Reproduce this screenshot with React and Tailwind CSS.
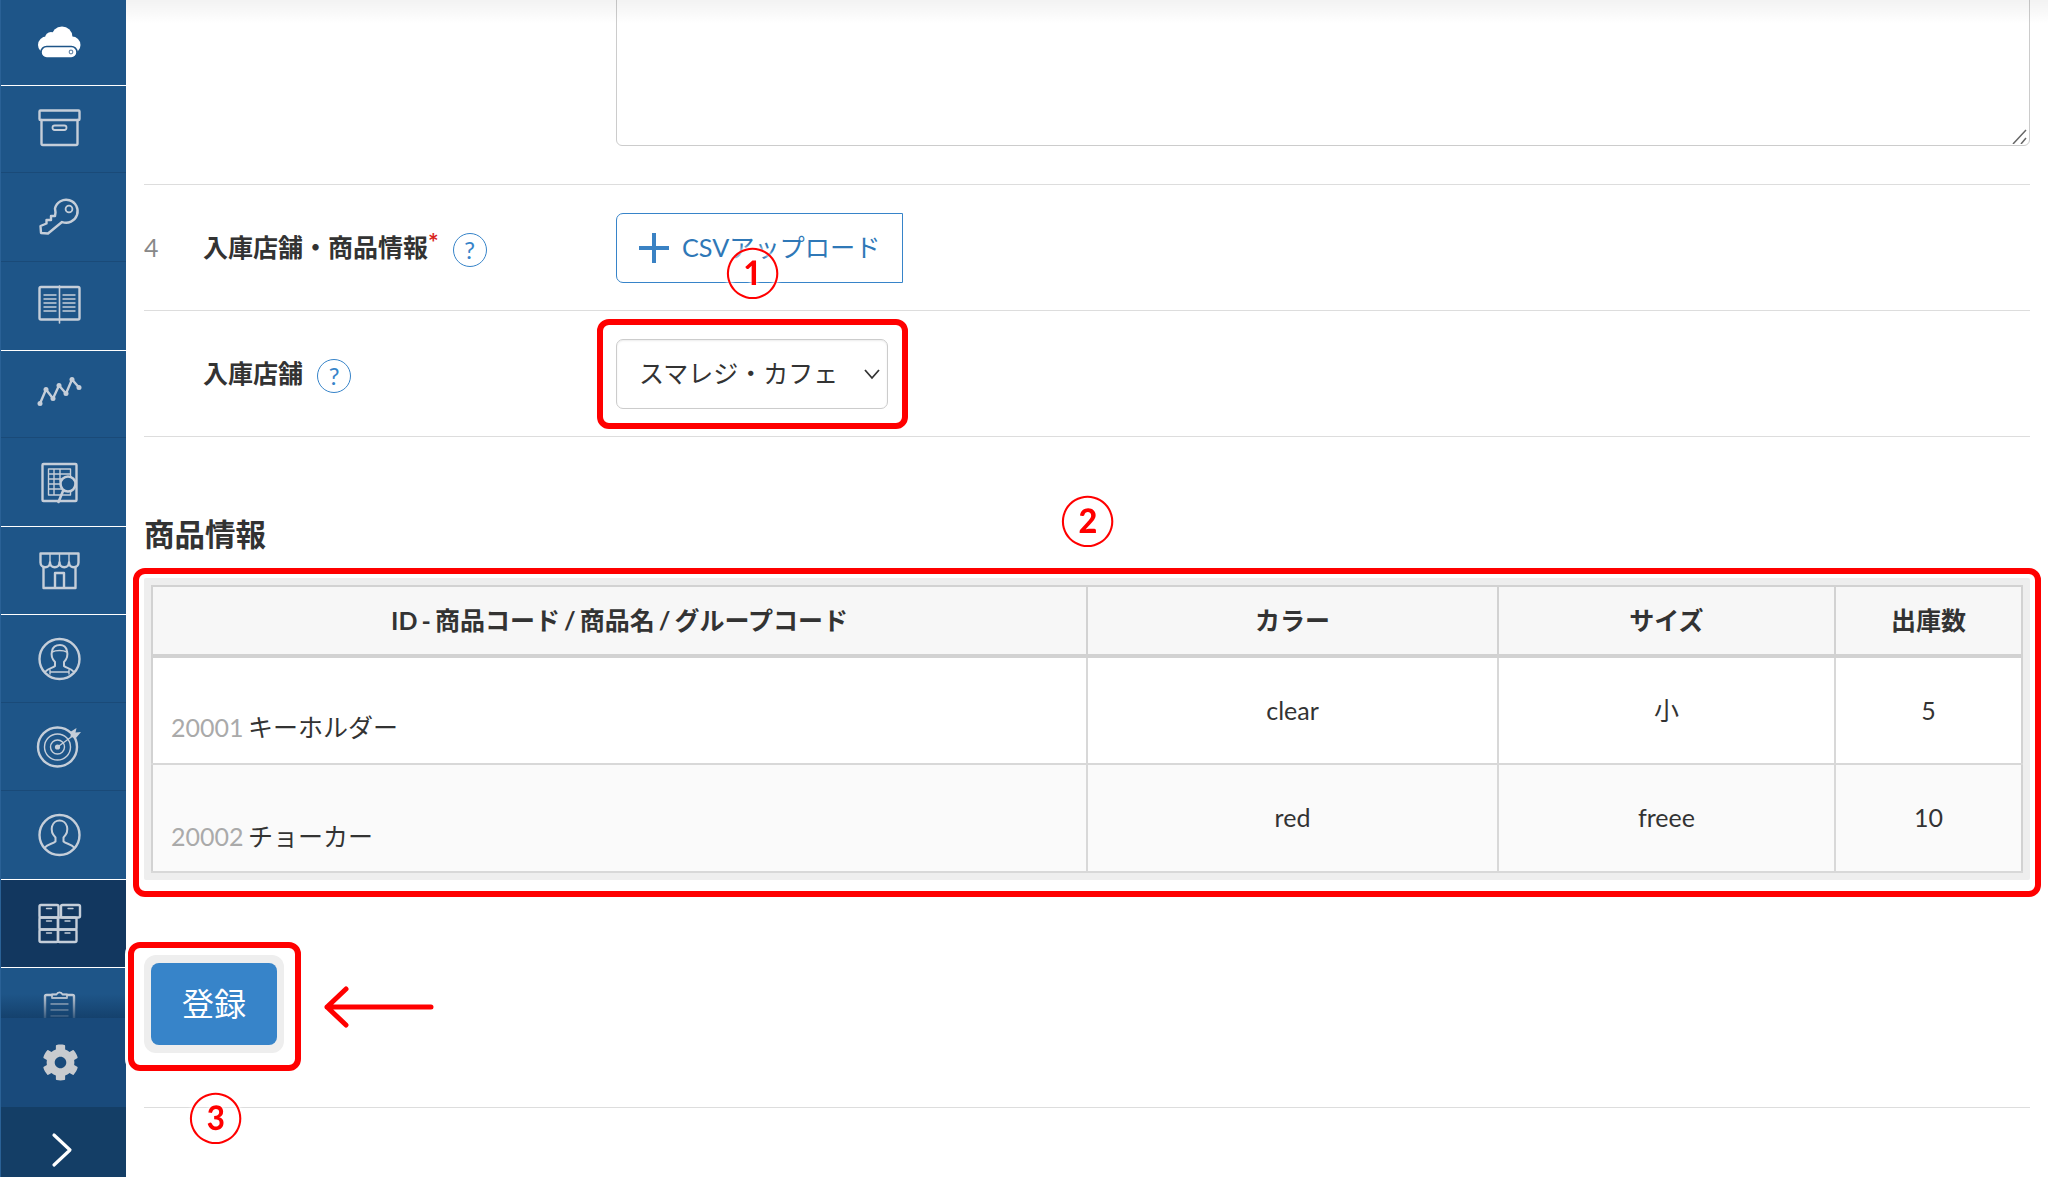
import { FaCog } from "react-icons/fa";

const line = { fill: "none", stroke: "#c5ced9", strokeWidth: 2.4, strokeLinecap: "round", strokeLinejoin: "round" };
const thin = { ...line, strokeWidth: 1.4 };

function Icon({ children }) {
  return (
    <svg width="46" height="46" viewBox="0 0 46 46">
      {children}
    </svg>
  );
}

function CloudIcon() {
  return (
    <Icon>
      <g fill="#ffffff">
        <circle cx="26" cy="17" r="10.5" />
        <circle cx="15" cy="18" r="6" />
        <circle cx="10.5" cy="25" r="8.5" />
        <circle cx="36" cy="25" r="8.5" />
        <rect x="10" y="20" width="26" height="13" />
      </g>
      <rect x="5" y="26.5" width="36" height="11.5" rx="5.7" fill="#ffffff" stroke="#1e5588" strokeWidth="1.6" />
      <circle cx="35" cy="32" r="1.8" fill="none" stroke="#6f8eae" strokeWidth="1.2" />
    </Icon>
  );
}

function BoxIcon() {
  return (
    <Icon>
      <rect x="3.5" y="4.5" width="40" height="9.5" rx="1" {...line} />
      <path d="M5.5 14v23.5a1.5 1.5 0 0 0 1.5 1.5h33a1.5 1.5 0 0 0 1.5-1.5V14" {...line} />
      <rect x="16.5" y="19.5" width="14" height="4.5" rx="2.2" {...thin} strokeWidth="1.8" />
    </Icon>
  );
}

function KeyIcon() {
  return (
    <Icon>
      <path d="M26 28 A11.5 11.5 0 1 0 19 14.5 L19.5 18.5 L19 22 L15 22 L15 26 L10.5 26 L10.5 29.5 L4.5 32 L5 39 L12 39.5 Z" {...line} />
      <circle cx="33" cy="15" r="3.4" {...line} strokeWidth="1.8" />
    </Icon>
  );
}

function BookIcon() {
  return (
    <Icon>
      <rect x="3.5" y="4" width="40" height="32.5" rx="1.5" {...line} />
      <path d="M23.5 3v37" {...line} strokeWidth="1.6" />
      <path d="M8 12h12M8 16h12M8 20h12M8 24h12M8 28h12M27 12h12M27 16h12M27 20h12M27 24h12M27 28h12" {...thin} />
    </Icon>
  );
}

function TrendIcon() {
  const pts = [[4, 32.5], [10, 18.5], [17, 27.5], [23, 14.5], [30, 22.5], [36, 8.5], [43, 16.5]];
  return (
    <Icon>
      <polyline points={pts.map((p) => p.join(",")).join(" ")} {...line} />
      {pts.map((p) => (
        <circle key={p[0]} cx={p[0]} cy={p[1]} r="2.5" fill="#c5ced9" />
      ))}
    </Icon>
  );
}

function ReportIcon() {
  return (
    <Icon>
      <rect x="6.5" y="5" width="34" height="37" rx="1" {...line} />
      <path d="M12.5 10h22v26h-22zM12.5 15h22M12.5 20h14M12.5 25h12M12.5 30h14M18 10v26M24 10v12" {...thin} />
      <circle cx="32" cy="25" r="7.5" fill="#1e5588" stroke="#c5ced9" strokeWidth="2.6" />
      <path d="M27 32L22.5 43" {...line} strokeWidth="2.6" />
    </Icon>
  );
}

function StoreIcon() {
  return (
    <Icon>
      <path d="M4.5 5.5h38v9a4.7 4.7 0 0 1-9.5 0 4.7 4.7 0 0 1-9.5 0 4.7 4.7 0 0 1-9.5 0 4.7 4.7 0 0 1-9.5 0z" {...line} />
      <path d="M14 6v8.5M23.5 6v8.5M33 6v8.5" {...thin} />
      <path d="M7.5 19v21h32V19M19 40V25h9v15" {...line} />
    </Icon>
  );
}

function StaffIcon() {
  return (
    <Icon>
      <circle cx="23.5" cy="23" r="20" {...line} />
      <path d="M9 36c3-4 8-4 10-6v-4c-3-3-4-7-3-11 1-5 5-6 8-6s6 1 7 6c1 4 0 8-3 11v4c2 2 7 2 10 6" {...thin} strokeWidth="2" />
      <path d="M16 16c4-2 11-2 15 0M14 34v4M33 34v4M14 36h19" {...thin} />
    </Icon>
  );
}

function TargetIcon() {
  return (
    <Icon>
      <circle cx="21.5" cy="23" r="19.5" {...line} />
      <circle cx="21.5" cy="23" r="13" {...thin} />
      <circle cx="21.5" cy="23" r="7" {...thin} />
      <circle cx="21.5" cy="23" r="2.6" fill="#c5ced9" />
      <path d="M21.5 23L38 11" {...thin} />
      <path d="M35 7.5l5.5-3.5-1 4.5 5.5-.5-5 6-5.5-1z" fill="#c5ced9" />
    </Icon>
  );
}

function UserIcon() {
  return (
    <Icon>
      <circle cx="23.5" cy="23" r="20" {...line} />
      <path d="M8.5 36c3-4 8-4 11-6.5v-4c-3-3-4.5-7-3.5-11 1-4 4.5-6 7.5-6s6.5 2 7.5 6c1 4-.5 8-3.5 11v4c3 2.5 8 2.5 11 6.5" {...line} strokeWidth="2" />
    </Icon>
  );
}

function DrawerIcon() {
  const cells = [
    [3.5, 4, 19, 12.5], [25, 4, 19, 12.5], [3.5, 16.5, 18.5, 12], [22, 16.5, 18.5, 12], [3.5, 28.5, 18.5, 12.5], [22, 28.5, 18.5, 12.5],
  ];
  return (
    <Icon>
      {cells.map((c) => (
        <g key={c.join("-")}>
          <rect x={c[0]} y={c[1]} width={c[2]} height={c[3]} rx="1.5" {...line} />
          <path d={`M${c[0] + 7} ${c[1] + 3.5}h5`} {...thin} />
        </g>
      ))}
    </Icon>
  );
}

function ClipboardIcon() {
  return (
    <Icon>
      <rect x="9" y="6" width="29" height="36" rx="1.5" {...line} />
      <path d="M16 9V5.5h4.5a3.2 3.2 0 0 1 6 0H31V9z" {...line} fill="#1e5588" strokeWidth="1.8" />
      <path d="M15 15h17M15 21h17M15 27h17" {...thin} />
    </Icon>
  );
}

const navItems = [
  { icon: <CloudIcon />, h: "h-[86px]", border: "border-white" },
  { icon: <BoxIcon />, h: "h-[87px]", border: "border-[#1a4a78]" },
  { icon: <KeyIcon />, h: "h-[89px]", border: "border-[#1a4a78]" },
  { icon: <BookIcon />, h: "h-[89px]", border: "border-white" },
  { icon: <TrendIcon />, h: "h-[87px]", border: "border-[#1a4a78]" },
  { icon: <ReportIcon />, h: "h-[89px]", border: "border-white" },
  { icon: <StoreIcon />, h: "h-[88px]", border: "border-white" },
  { icon: <StaffIcon />, h: "h-[88px]", border: "border-[#1a4a78]" },
  { icon: <TargetIcon />, h: "h-[88px]", border: "border-[#1a4a78]" },
  { icon: <UserIcon />, h: "h-[89px]", border: "border-white" },
  { icon: <DrawerIcon />, h: "h-[88px]", border: "border-white", active: true },
  { icon: <ClipboardIcon />, h: "h-[88px]", border: "border-transparent" },
];

function Sidebar() {
  return (
    <aside className="flex flex-col w-[126px] h-[1177px] shrink-0 bg-[#1e5588] border-l border-[#2a6196]">
      <div className="relative h-[1018px] overflow-hidden">
        {navItems.map((item, i) => (
          <div
            key={i}
            className={`flex items-center pl-[35px] border-b ${item.h} ${item.border} ${item.active ? "bg-[#12375f]" : ""}`}
          >
            {item.icon}
          </div>
        ))}
        <div className="absolute left-0 right-0 bottom-0 h-[24px] bg-gradient-to-b from-transparent to-[#123c66]/80"></div>
      </div>
      <div className="flex items-center pl-[41px] h-[89px] bg-[#194a7b]">
        <FaCog className="w-[37px] h-[37px] text-[#c8cbcf]" />
      </div>
      <div className="flex items-center pl-[50px] pt-[15px] h-[70px] bg-[#143e66]">
        <svg width="24" height="36" viewBox="0 0 24 36" fill="none" stroke="#ffffff" strokeWidth="3.2" strokeLinecap="round" strokeLinejoin="round">
          <path d="M3 3l16 15L3 33" />
        </svg>
      </div>
    </aside>
  );
}

function Help() {
  return (
    <span className="inline-flex items-center justify-center w-[34px] h-[34px] mt-[4px] rounded-full border border-[#3784c9] text-[#3784c9] text-[24px] font-normal leading-none">
      ?
    </span>
  );
}

const rows = [
  { id: "20001", name: "キーホルダー", color: "clear", size: "小", qty: "5", bg: "bg-white", pad: "pt-[34px]" },
  { id: "20002", name: "チョーカー", color: "red", size: "freee", qty: "10", bg: "bg-[#fafafa]", pad: "pt-[37px]" },
];

function ProductTable() {
  return (
    <div className="rounded-[2px] bg-[#eeeeee] pl-[7px] pr-[7px] py-[7px]">
      <table className="w-full table-fixed border-collapse border-2 border-[#d2d2d2] text-[25px] text-[#333333]">
        <colgroup>
          <col className="w-[935px]" />
          <col className="w-[411px]" />
          <col className="w-[337px]" />
          <col />
        </colgroup>
        <thead>
          <tr className="h-[70px] bg-[#f7f7f7] font-bold [word-spacing:-2px]">
            <th className="border-r-2 border-b-4 border-[#d2d2d2] font-bold">ID - 商品コード / 商品名 / グループコード</th>
            <th className="border-r-2 border-b-4 border-[#d2d2d2] font-bold">カラー</th>
            <th className="border-r-2 border-b-4 border-[#d2d2d2] font-bold">サイズ</th>
            <th className="border-b-4 border-[#d2d2d2] font-bold">出庫数</th>
          </tr>
        </thead>
        <tbody>
          {rows.map((r) => (
            <tr key={r.id} className={`h-[108px] ${r.bg}`}>
              <td className={`border-r-2 border-b-2 border-[#d8d8d8] pl-[18px] [word-spacing:-2px] ${r.pad}`}>
                <span className="text-[#aaaaaa]">{r.id}</span> {r.name}
              </td>
              <td className="border-r-2 border-b-2 border-[#d8d8d8] text-center">{r.color}</td>
              <td className="border-r-2 border-b-2 border-[#d8d8d8] text-center">{r.size}</td>
              <td className="border-b-2 border-[#d8d8d8] text-center">{r.qty}</td>
            </tr>
          ))}
        </tbody>
      </table>
    </div>
  );
}

function Circled({ className, children }) {
  return (
    <span className={`absolute z-20 text-[50px] leading-none text-[#ff0000] [text-shadow:0_0_4px_#ffffff,0_0_4px_#ffffff] ${className}`}>
      {children}
    </span>
  );
}

function App() {
  return (
    <div className="relative flex w-[2048px] h-[1177px] overflow-hidden bg-white font-['Lato','Noto_Sans_CJK_JP',sans-serif] text-[#333333]">
      <Sidebar />

      <main className="flex-1 pl-[18px] pr-[18px]">
        <div className="flex pl-[472px] h-[146px]">
          <div className="relative w-full h-[156px] -mt-[10px]">
            <textarea
              readOnly
              className="block w-full h-full resize-none rounded-[6px] border border-[#cccccc] outline-none"
            ></textarea>
            <svg className="absolute right-[3px] bottom-[2px]" width="15" height="15" viewBox="0 0 15 15" stroke="#666666" strokeWidth="1.5">
              <path d="M1 15L14 1M9 15l5-6" />
            </svg>
          </div>
        </div>
        <div className="mt-[38px] border-t border-[#dddddd]"></div>

        <div className="flex items-center h-[126px] border-b border-[#dddddd]">
          <span className="w-[59px] text-[25px] text-[#888888]">4</span>
          <div className="flex items-center gap-[14px] w-[413px] text-[25px] font-bold">
            <span>
              入庫店舗・商品情報<span className="relative -top-[5px] text-[#d9241c] text-[25px] leading-none">*</span>
            </span>
            <Help />
          </div>
          <button className="flex items-center w-[287px] h-[70px] pl-[21px] gap-[12px] bg-white border border-[#3784c9] rounded-l-[7px] text-[25.2px] text-[#2f78b7]">
            <svg width="32" height="32" viewBox="0 0 32 32" stroke="#3a82c4" strokeWidth="4">
              <path d="M16 1v30M1 16h30" />
            </svg>
            CSVアップロード
          </button>
        </div>

        <div className="flex items-center h-[126px] border-b border-[#dddddd]">
          <span className="w-[59px]"></span>
          <div className="flex items-center gap-[14px] w-[413px] text-[25px] font-bold">
            <span>入庫店舗</span>
            <Help />
          </div>
          <div className="flex items-center w-[272px] h-[70px] pl-[22px] border border-[#cccccc] rounded-[7px] text-[25px] whitespace-nowrap bg-white shadow-[inset_0_1px_2px_rgba(0,0,0,0.08)]">
            <span className="flex-1">スマレジ・カフェ</span>
            <svg className="mr-[6px]" width="18" height="12" viewBox="0 0 18 12" fill="none" stroke="#333333" strokeWidth="1.8">
              <path d="M2 2l7 8 7-8" />
            </svg>
          </div>
        </div>

        <h3 className="mt-[77px] mb-[24px] h-[40px] text-[30.5px] leading-[40px] font-bold">商品情報</h3>

        <ProductTable />

        <div className="mt-[75px] w-[140px] rounded-[12px] bg-[#eeeeee] px-[7px] py-[8px]">
          <button className="flex items-center justify-center w-[126px] h-[82px] rounded-[8px] bg-[#3784c9] text-white text-[32px]">
            登録
          </button>
        </div>

        <div className="mt-[54px] border-t border-[#dddddd]"></div>
      </main>

      <div className="pointer-events-none absolute left-[126px] right-0 top-0 h-[24px] bg-gradient-to-b from-black/5 to-transparent"></div>

      <div className="absolute z-10 left-[597px] top-[319px] w-[311px] h-[110px] rounded-[12px] border-[6px] border-[#ff0000]"></div>
      <div className="absolute z-10 left-[133px] top-[568px] w-[1908px] h-[329px] rounded-[12px] border-[6px] border-[#ff0000]"></div>
      <div className="absolute z-10 left-[128px] top-[942px] w-[173px] h-[129px] rounded-[12px] border-[6px] border-[#ff0000] shadow-[0_0_0_3px_#ffffff]"></div>

      <Circled className="left-[725px] top-[246px]">①</Circled>
      <Circled className="left-[1060px] top-[494px]">②</Circled>
      <Circled className="left-[188px] top-[1091px]">③</Circled>

      <svg className="absolute z-10 left-[322px] top-[985px]" width="114" height="44" viewBox="0 0 114 44" fill="none" stroke="#ff0000" strokeWidth="5" strokeLinecap="round" strokeLinejoin="round">
        <path d="M5 22h104M24 4L5 22l19 18" />
      </svg>
    </div>
  );
}

export default App;
